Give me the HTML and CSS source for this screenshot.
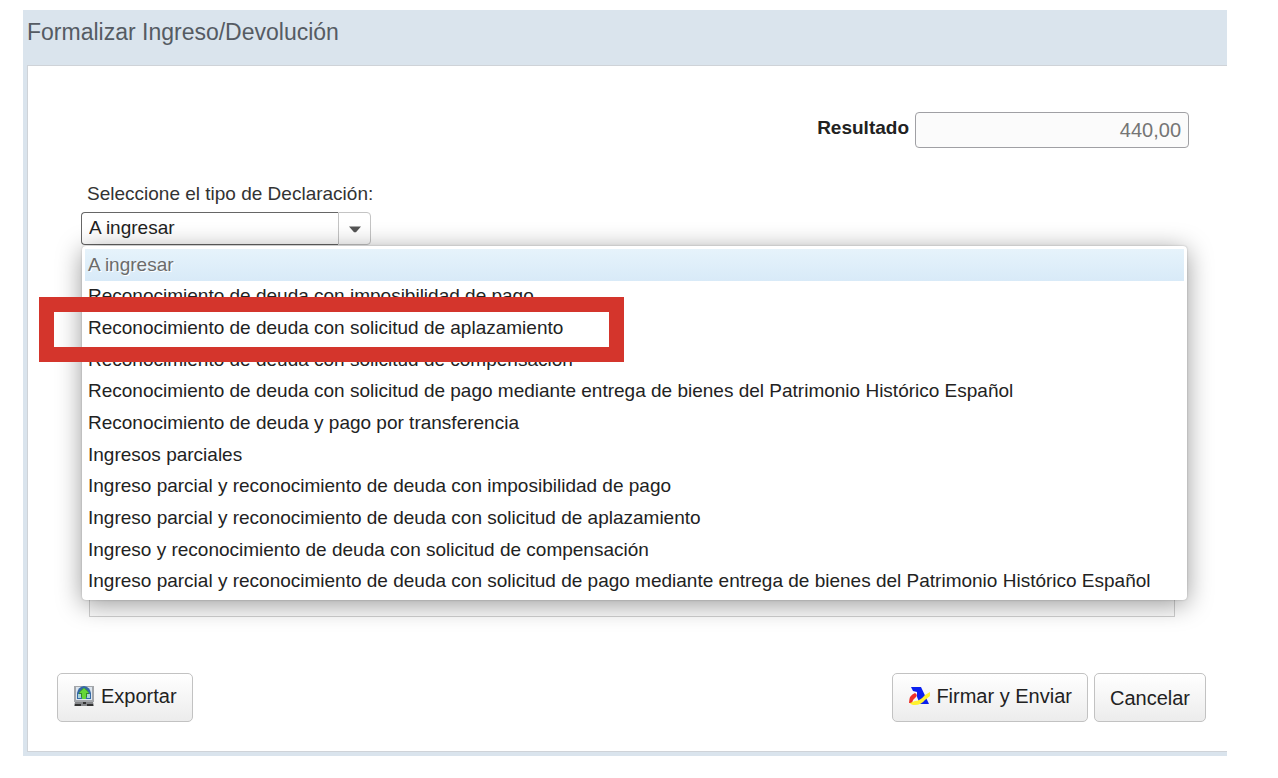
FILE: index.html
```html
<!DOCTYPE html>
<html lang="es">
<head>
<meta charset="utf-8">
<meta name="viewport" content="width=device-width, initial-scale=1">
<title>Formalizar Ingreso/Devolución</title>
<link rel="stylesheet" href="styles.css">
</head>
<body>
<main class="dialog">
  <h1 class="dialog-title">Formalizar Ingreso/Devolución</h1>
  <form class="panel">
    <div class="result">
      <label class="result-label" for="resultado">Resultado</label>
      <input class="result-value" id="resultado" type="text" value="440,00" readonly>
    </div>
    <div class="declaration">
      <label class="declaration-label" for="tipo">Seleccione el tipo de Declaración:</label>
      <div class="combo">
        <input class="combo-input" id="tipo" type="text" value="A ingresar" role="combobox" aria-expanded="true" aria-controls="tipos">
        <button class="combo-toggle" type="button" aria-label="Abrir lista">
          <svg width="12" height="7" viewBox="0 0 12 7"><path d="M0 0.5h12L7 6.3H5z" fill="#555"/></svg>
        </button>
      </div>
      <ul class="options" id="tipos" role="listbox" aria-label="Tipo de Declaración">
        <li class="option option-selected" role="option" aria-selected="true">A ingresar</li>
        <li class="option" role="option">Reconocimiento de deuda con imposibilidad de pago</li>
        <li class="option option-marked" role="option">Reconocimiento de deuda con solicitud de aplazamiento</li>
        <li class="option" role="option">Reconocimiento de deuda con solicitud de compensación</li>
        <li class="option" role="option">Reconocimiento de deuda con solicitud de pago mediante entrega de bienes del Patrimonio Histórico Español</li>
        <li class="option" role="option">Reconocimiento de deuda y pago por transferencia</li>
        <li class="option" role="option">Ingresos parciales</li>
        <li class="option" role="option">Ingreso parcial y reconocimiento de deuda con imposibilidad de pago</li>
        <li class="option" role="option">Ingreso parcial y reconocimiento de deuda con solicitud de aplazamiento</li>
        <li class="option" role="option">Ingreso y reconocimiento de deuda con solicitud de compensación</li>
        <li class="option" role="option">Ingreso parcial y reconocimiento de deuda con solicitud de pago mediante entrega de bienes del Patrimonio Histórico Español</li>
      </ul>
    </div>
    <div class="details"></div>
    <div class="actions">
      <button class="button button-icon button-export" type="button">
        <svg width="22" height="22" viewBox="0 0 22 22">
          <path d="M1 1h20v16H1z" fill="#a3a6aa"/>
          <path d="M3 2h16v13H3z" fill="#dce5ee"/>
          <path d="M4 14V8Q5 2 11 1q6 1 7 7v6z" fill="#3569a5"/>
          <path d="M6 12V9q1-4 5-6 4 2 5 6v3z" fill="#348d22"/>
          <path d="M11 3l5 5h-3v6H9V8H6z" fill="#65d637"/>
          <path d="M5 9h3v4H5zM14 9h3v4h-3z" fill="#a7d1d6"/>
          <path d="M2 17h18l1 4H1z" fill="#85878a"/>
          <path d="M2 19h6v2H2zM14 19h6v2h-6zM10 17h3v2h-3z" fill="#333"/>
        </svg>
        <span>Exportar</span>
      </button>
      <button class="button button-icon" type="submit">
        <svg width="22" height="20" viewBox="0 0 22 20">
          <path d="M3 1h10l8 17h-9L9 11V6L5 5z" fill="#0b20ef"/>
          <path d="M1 17q0-8 6-10 3 2 1 4-3 2-4 6z" fill="#ed3027"/>
          <path d="M2 17q1 2 5 2 6 0 10-5l5-4V6l-5 3q-5 6-10 6z" fill="#fff22e"/>
        </svg>
        <span>Firmar y Enviar</span>
      </button>
      <button class="button" type="button">Cancelar</button>
    </div>
  </form>
</main>
</body>
</html>
```
FILE: styles.css
```css
*,
*::after {
  box-sizing: border-box;
}

body {
  margin: 10px 51px 22px 23px;
  background: #fff;
  color: #222;
  font: 20px/24px "Liberation Sans", Arial, sans-serif;
}

.dialog {
  padding: 0 0 4px 4px;
  background: #dae4ed;
}

.dialog-title {
  margin: 0;
  padding: 8px 0 19px;
  color: #555b63;
  font-size: 23px;
  font-weight: 400;
  line-height: 28px;
}

.panel {
  display: flex;
  flex-direction: column;
  padding: 46px 21px 29px 29px;
  border: solid #cfd3d8;
  border-width: 1px 0 1px 1px;
  background: #fff;
}

.result {
  display: flex;
  justify-content: flex-end;
  align-items: center;
  gap: 6px;
  padding-right: 17px;
}

.result-label {
  padding-bottom: 4px;
  font-size: 19px;
  font-weight: 700;
}

.result-value {
  width: 274px;
  height: 36px;
  padding: 0 7px;
  border: 1px solid #a0a0a4;
  border-radius: 4px;
  background: #fbfbfb;
  color: #757575;
  font: inherit;
  text-align: right;
}

.declaration {
  position: relative;
  padding: 34px 0 0 24px;
  font-size: 19px;
}

.declaration-label {
  display: block;
  padding: 0 0 6px 6px;
  color: #333;
}

.combo {
  display: flex;
  width: 290px;
  height: 33px;
}

.combo-input {
  flex: 1;
  min-width: 0;
  padding: 0 7px 2px;
  border: 1px solid #666;
  border-right: 0;
  border-radius: 4px 0 0 4px;
  background: #fff;
  color: #222;
  font: inherit;
}

.combo-toggle {
  display: grid;
  place-items: center;
  width: 33px;
  padding: 2px 0 0;
  border: 1px solid #c4c4c4;
  border-radius: 0 4px 4px 0;
  background: #fff;
}

.options {
  position: absolute;
  top: 100%;
  left: 25px;
  right: 19px;
  display: grid;
  grid-auto-rows: 1fr;
  height: 354px;
  margin: 1px 0 0;
  padding: 3px;
  border-radius: 4px;
  background: #fff;
  box-shadow: 0 0 2px rgba(0, 0, 0, 0.25), 0 4px 26px rgba(0, 0, 0, 0.4);
  list-style: none;
}

.option {
  display: flex;
  align-items: center;
  padding: 0 3px;
  white-space: nowrap;
}

.option-selected {
  background: linear-gradient(#e6f3fb, #d8eaf8);
  color: #6b6b6b;
  text-shadow: 1px 1px 0 #fff;
}

.option-marked {
  position: relative;
}

.option-marked::after {
  content: "";
  position: absolute;
  top: -15px;
  left: -46px;
  width: 585px;
  height: 65px;
  border: 15px solid #d4352c;
}

.details {
  height: 362px;
  margin: 10px 31px 0 32px;
  border: 1px solid #d0d0d0;
  background: #fcfcfc;
}

.actions {
  display: flex;
  gap: 6px;
  padding-top: 56px;
}

.button {
  display: flex;
  align-items: center;
  gap: 6px;
  height: 49px;
  padding: 0 15px;
  border: 1px solid #c2c2c2;
  border-radius: 5px;
  background: linear-gradient(#fff, #ececec);
  color: #222;
  font: inherit;
}

.button-icon {
  padding-bottom: 4px;
}

.button-export {
  margin-right: auto;
}
```
